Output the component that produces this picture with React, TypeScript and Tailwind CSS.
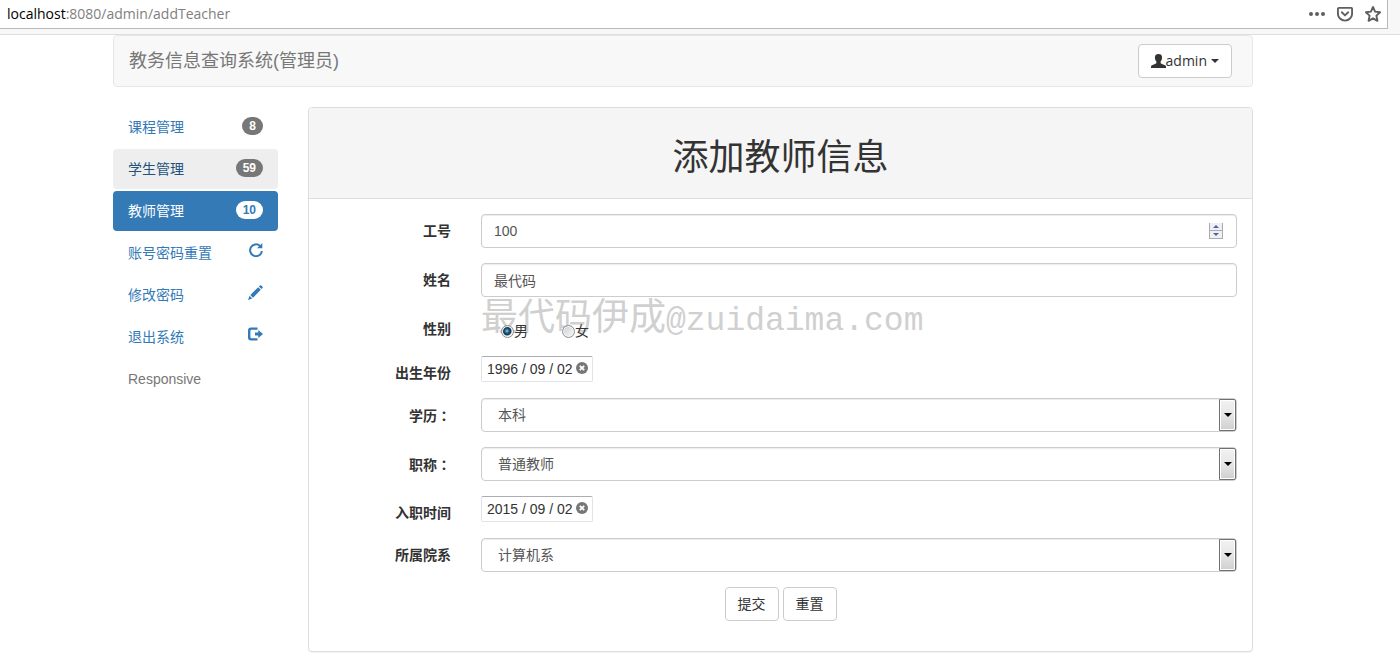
import { useState } from "react";
import type { ReactNode } from "react";
import clsx from "clsx";

function UserIcon() {
  return (
    <svg viewBox="0 0 15 14" fill="currentColor" aria-hidden className="w-[15px] h-[14px] shrink-0">
      <path d="M7.500 0C5.300 0 3.900 1.200 3.900 3.400c0 1.600.6 3 1.500 4v1.400c0 .5-.3.8-.8 1L1 11.300c-.7.3-1 .8-1 1.400V14h15v-1.300c0-.6-.3-1.100-1-1.400l-3.600-1.500c-.5-.2-.8-.5-.8-1V7.400c.9-1 1.500-2.400 1.500-4C11.100 1.200 9.700 0 7.500 0z" />
    </svg>
  );
}

function RepeatIcon() {
  return (
    <svg viewBox="0 0 14 14" fill="currentColor" aria-hidden className="w-[14px] h-[14px]">
      <path
        d="M11 2.900A5.900 5.900 0 1 0 12.900 8"
        fill="none"
        stroke="currentColor"
        strokeWidth="2"
      />
      <path d="M13.300 0v5.300H8z" />
    </svg>
  );
}

function PencilIcon() {
  return (
    <svg viewBox="0 0 15 15" fill="currentColor" aria-hidden className="w-[15px] h-[15px]">
      <path d="M11.900.5c.4-.4.9-.4 1.300 0l1.300 1.300c.4.4.4.9 0 1.300l-1 1-2.600-2.600zM10.200 2.200l2.600 2.600-7.800 7.900L2.300 10zM1.600 10.800 4.200 13.400 0 15z" />
    </svg>
  );
}

function LogoutIcon() {
  return (
    <svg viewBox="0 0 15 14" fill="currentColor" aria-hidden className="w-[15px] h-[14px]">
      <path d="M9.500.5H3A3 3 0 0 0 0 3.500v7a3 3 0 0 0 3 3h6.500v-2.300H3.600a1.200 1.200 0 0 1-1.200-1.200V4a1.200 1.200 0 0 1 1.200-1.200h5.900z" />
      <path d="M10.300 3 15 7l-4.700 4V8.600H7V5.400h3.300z" />
    </svg>
  );
}

function AddressBar() {
  return (
    <header className="h-[35px] bg-[#f7f7f8] border-b border-[#dedede] pr-3 font-['Open_Sans','Noto_Sans',sans-serif]">
      <div className="h-[29px] flex items-center justify-between bg-white border-b border-r border-[#b8b8b8] pl-[7px] pr-[6px] text-sm leading-5">
        <p className="text-[#808080]">
          <span className="text-black">localhost</span>:8080/admin/addTeacher
        </p>
        <div className="flex items-center gap-3 text-[#5f5f61]">
          <button type="button" aria-label="更多" className="w-4 h-4">
            <svg viewBox="0 0 16 16" fill="currentColor" className="w-4 h-4">
              <circle cx="2" cy="8" r="2" />
              <circle cx="8" cy="8" r="2" />
              <circle cx="14" cy="8" r="2" />
            </svg>
          </button>
          <button type="button" aria-label="Pocket" className="w-4 h-4">
            <svg viewBox="0 0 16 16" fill="none" stroke="currentColor" strokeWidth="1.900" strokeLinecap="round" strokeLinejoin="round" className="w-4 h-4">
              <path d="M2 1.900h12a1.100 1.100 0 0 1 1.100 1.100v4.500a7.100 7.100 0 0 1-14.200 0V3A1.100 1.100 0 0 1 2 1.900z" />
              <path d="M4.800 6.300 8 9.400l3.200-3.100" />
            </svg>
          </button>
          <button type="button" aria-label="收藏" className="w-4 h-4">
            <svg viewBox="0 0 16 16" fill="none" stroke="currentColor" strokeWidth="1.900" strokeLinejoin="round" className="w-4 h-4">
              <path d="M8 1 10.100 5.600 15.100 6.200 11.400 9.600 12.400 14.800 8 12.300 3.600 14.800 4.600 9.600.9 6.200 5.900 5.600z" />
            </svg>
          </button>
        </div>
      </div>
    </header>
  );
}

function Navbar() {
  return (
    <nav className="flex items-start justify-between bg-[#f8f8f8] border border-[#e7e7e7] rounded pl-[15px] pr-5 h-[52px]">
      <a href="#" className="text-lg leading-5 py-[15px] text-[#777]">
        教务信息查询系统(管理员)
      </a>
      <button
        type="button"
        className="mt-2 h-[34px] px-3 flex items-center bg-white border border-[#ccc] rounded text-[#333] text-sm font-['Open_Sans','Noto_Sans',sans-serif]"
      >
        <UserIcon />
        admin
        <span className="ml-1 border-x-4 border-x-transparent border-t-4 border-t-[#333]" />
      </button>
    </nav>
  );
}

const menu: { label: string; badge?: number; icon?: ReactNode; state?: "hover" | "active" }[] = [
  { label: "课程管理", badge: 8 },
  { label: "学生管理", badge: 59, state: "hover" },
  { label: "教师管理", badge: 10, state: "active" },
  { label: "账号密码重置", icon: <RepeatIcon /> },
  { label: "修改密码", icon: <PencilIcon /> },
  { label: "退出系统", icon: <LogoutIcon /> },
];

function Sidebar() {
  return (
    <ul className="w-[165px] shrink-0 flex flex-col gap-[2px]">
      {menu.map((item) => (
        <li key={item.label}>
          <a
            href="#"
            className={clsx(
              "flex items-start justify-between px-[15px] py-[10px] rounded",
              item.state === "active" && "bg-[#337ab7] text-white",
              item.state === "hover" && "bg-[#eee] text-[#23527c]",
              !item.state && "text-[#337ab7]"
            )}
          >
            {item.label}
            {item.badge !== undefined && (
              <span
                className={clsx(
                  "rounded-[10px] px-[7px] py-[3px] text-xs leading-3 font-bold",
                  item.state === "active" ? "bg-white text-[#337ab7]" : "bg-[#777] text-white"
                )}
              >
                {item.badge}
              </span>
            )}
            {item.icon}
          </a>
        </li>
      ))}
      <li className="px-[15px] py-[10px] text-[#777]">Responsive</li>
    </ul>
  );
}

function Row({ label, htmlFor, children }: { label: string; htmlFor?: string; children: ReactNode }) {
  return (
    <div className="flex items-start gap-[30px] mb-[15px]">
      <label
        htmlFor={htmlFor}
        className="w-[127px] shrink-0 pt-[7px] text-right font-bold"
      >
        {label.replace("：", "")}
        {/* the TC face centres the full-width colon */}
        {label.endsWith("：") && <span className="font-['Noto_Sans_CJK_TC',sans-serif]" lang="zh-TW">：</span>}
      </label>
      <div className="relative flex-1">{children}</div>
    </div>
  );
}

const control =
  "block w-full h-[34px] bg-white border border-[#ccc] rounded text-[#555] shadow-[inset_0_1px_1px_rgba(0,0,0,0.075)] outline-none";

function NumberField({ id }: { id: string }) {
  const [value, setValue] = useState(100);
  return (
    <>
      <input
        id={id}
        inputMode="numeric"
        value={value}
        onChange={(e) => setValue(Number(e.target.value) || 0)}
        className={clsx(control, "px-3")}
      />
      <div className="absolute right-[14px] top-[9px] w-[14px] h-4 flex flex-col border border-t-0 border-[#a9a9b5] bg-[#f0f0f0]">
        <button
          type="button"
          aria-label="增加"
          onClick={() => setValue(value + 1)}
          className="flex-1 flex items-center justify-center border-b border-[#a9a9b5]"
        >
          <span className="border-x-3 border-x-transparent border-b-3 border-b-[#4c62b3]" />
        </button>
        <button
          type="button"
          aria-label="减少"
          onClick={() => setValue(value - 1)}
          className="flex-1 flex items-center justify-center"
        >
          <span className="border-x-3 border-x-transparent border-t-3 border-t-[#4c62b3]" />
        </button>
      </div>
    </>
  );
}

function DateField({ id, initial }: { id: string; initial: string }) {
  const [value, setValue] = useState(initial);
  return (
    <div className="w-[112px] h-[26px] flex items-center bg-white border border-[#e2e3ea] border-t-[#abadb3] rounded-xs pl-[5px] pr-1">
      <input
        id={id}
        value={value}
        onChange={(e) => setValue(e.target.value)}
        className="flex-1 min-w-0 text-[#333] outline-none"
      />
      <button type="button" aria-label="清除" onClick={() => setValue("")} className="shrink-0 w-3 h-3 mb-[2px]">
        <svg viewBox="0 0 12 12" className="w-3 h-3">
          <circle cx="6" cy="6" r="6" fill="#777" />
          <path d="M3.800 3.800 8.200 8.200M8.200 3.800 3.800 8.200" stroke="#fff" strokeWidth="1.800" />
        </svg>
      </button>
    </div>
  );
}

function SelectField({ id, options }: { id: string; options: string[] }) {
  return (
    <>
      <select id={id} className={clsx(control, "appearance-none pl-4 pr-6")}>
        {options.map((o) => (
          <option key={o}>{o}</option>
        ))}
      </select>
      <span className="pointer-events-none absolute right-px top-px bottom-px w-[17px] flex items-center justify-center border border-[#707070] rounded-r-xs bg-linear-to-b from-[#f2f2f2] via-[#e6e6e6] to-[#cfcfcf] shadow-[inset_0_0_0_1px_#fff]">
        <span className="border-x-4 border-x-transparent border-t-4 border-t-black" />
      </span>
    </>
  );
}

function Radio({ label, checked }: { label: string; checked?: boolean }) {
  return (
    <label className="flex items-center">
      <input
        type="radio"
        name="sex"
        defaultChecked={checked}
        className="appearance-none w-[13px] h-[13px] rounded-full border border-[#8e8f8f] bg-linear-to-br from-[#c9cdd3] to-[#fbfbfb] shadow-[inset_0_0_0_1px_#f4f4f4] checked:bg-[radial-gradient(circle_at_5px_5px,#9fdcf5_0,#1d5d85_2px,#16344e_4px,#e4e8ec_5px)]"
      />
      {label}
    </label>
  );
}

export default function App() {
  return (
    <div className="min-h-screen bg-white text-sm leading-5 text-[#333] font-['Liberation_Sans','Noto_Sans_CJK_SC',sans-serif]">
      <AddressBar />
      <div className="pr-[34px]">
        <div className="max-w-[1140px] mx-auto">
          <Navbar />
          <div className="mt-5 flex items-start gap-[30px]">
            <Sidebar />
            <main className="flex-1 bg-white border border-[#ddd] rounded shadow-[0_1px_1px_rgba(0,0,0,0.05)]">
              <div className="bg-[#f5f5f5] border-b border-[#ddd] rounded-t-[3px] pt-[30px] pb-5 text-center">
                <h1 className="text-4xl leading-10">添加教师信息</h1>
              </div>
              <form className="p-[15px]" onSubmit={(e) => e.preventDefault()}>
                <Row label="工号" htmlFor="number">
                  <NumberField id="number" />
                </Row>
                <Row label="姓名" htmlFor="name">
                  <input id="name" defaultValue="最代码" className={clsx(control, "px-3")} />
                </Row>
                <Row label="性别">
                  {/* watermark */}
                  <div className="pointer-events-none absolute left-0 -top-[14px] flex items-baseline whitespace-nowrap leading-10 text-[#d0d0d0]">
                    <span className="text-[37px]">最代码伊成</span>
                    <span className="text-[33px] font-['Liberation_Mono',monospace]">@zuidaima.com</span>
                  </div>
                  <div className="relative flex gap-[34px] pt-[9px] pl-5" role="radiogroup" aria-label="性别">
                    <Radio label="男" checked />
                    <Radio label="女" />
                  </div>
                </Row>
                <Row label="出生年份" htmlFor="birth">
                  <DateField id="birth" initial="1996 / 09 / 02" />
                </Row>
                <Row label="学历：" htmlFor="degree">
                  <SelectField id="degree" options={["本科", "硕士", "博士"]} />
                </Row>
                <Row label="职称：" htmlFor="title">
                  <SelectField id="title" options={["普通教师", "副教授", "教授"]} />
                </Row>
                <Row label="入职时间" htmlFor="entry">
                  <DateField id="entry" initial="2015 / 09 / 02" />
                </Row>
                <Row label="所属院系" htmlFor="college">
                  <SelectField id="college" options={["计算机系", "设计系", "财经系"]} />
                </Row>
                <div className="flex justify-center gap-1 mb-[15px]">
                  <button type="submit" className="h-[34px] px-3 bg-white border border-[#ccc] rounded">
                    提交
                  </button>
                  <button type="reset" className="h-[34px] px-3 bg-white border border-[#ccc] rounded">
                    重置
                  </button>
                </div>
              </form>
            </main>
          </div>
        </div>
      </div>
    </div>
  );
}
